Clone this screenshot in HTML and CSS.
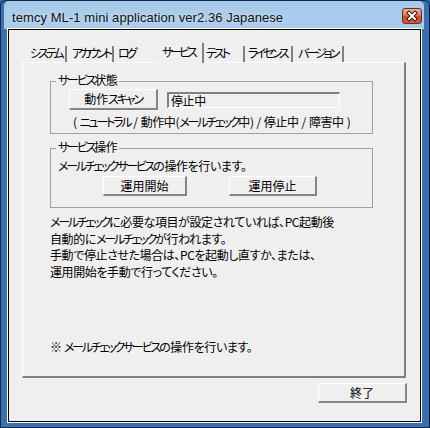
FILE: index.html
```html
<!DOCTYPE html>
<html lang="ja">
<head>
    <meta charset="UTF-8">
    <title>temcy ML-1 mini application</title>
    <link rel="stylesheet" href="styles.css">
</head>
<body>

<div class="window">
    <div class="titlebar">
        <span class="title">temcy ML-1 mini application ver2.36 Japanese</span>
        <button class="close-btn" aria-label="閉じる">
            <svg width="20" height="16" viewBox="0 0 20 16">
                <defs>
                    <linearGradient id="closeGrad" x1="0" y1="0" x2="0" y2="1">
                        <stop offset="0" stop-color="#ecb4a4"/>
                        <stop offset="0.45" stop-color="#dc7a62"/>
                        <stop offset="0.55" stop-color="#c8472a"/>
                        <stop offset="1" stop-color="#d4603c"/>
                    </linearGradient>
                </defs>
                <rect x="0.5" y="0.5" width="19" height="15" rx="2.5" fill="url(#closeGrad)" stroke="#6e2a1c"/>
                <path d="M7 5 L13 11 M13 5 L7 11" stroke="#3a1208" stroke-width="4" stroke-linecap="square"/>
                <path d="M7 5 L13 11 M13 5 L7 11" stroke="#ffffff" stroke-width="2" stroke-linecap="square"/>
            </svg>
        </button>
    </div>

    <div class="client">
        <ul class="tabs">
            <li class="tab">システム</li>
            <li class="tab">アカウント</li>
            <li class="tab">ログ</li>
            <li class="tab active">サービス</li>
            <li class="tab">テスト</li>
            <li class="tab">ライセンス</li>
            <li class="tab">バージョン</li>
        </ul>

        <div class="panel">
            <div class="group group-state">
                <span class="group-title"><span class="kana">サービス</span>状態</span>
                <div class="state-row">
                    <button class="btn btn-scan">動作<span class="kana">スキャン</span></button>
                    <div class="field">停止中</div>
                </div>
                <p class="state-note">( <span class="kana">ニュートラル</span> / 動作中(<span class="kana">メールチェック</span>中) / 停止中 / 障害中 )</p>
            </div>

            <div class="group group-ops">
                <span class="group-title"><span class="kana">サービス</span>操作</span>
                <p class="ops-desc"><span class="kana">メールチェックサービス</span>の操作を行います。</p>
                <div class="ops-row">
                    <button class="btn btn-start">運用開始</button>
                    <button class="btn btn-stop">運用停止</button>
                </div>
            </div>

            <p class="info">
                <span class="kana">メールチェック</span>に必要な項目が設定されていれば、PC起動後<br>
                自動的に<span class="kana">メールチェック</span>が行われます。<br>
                手動で停止させた場合は、PCを起動し直すか、または、<br>
                運用開始を手動で行ってください。
            </p>

            <p class="note">※ <span class="kana">メールチェックサービス</span>の操作を行います。</p>
        </div>

        <div class="footer">
            <button class="btn btn-exit">終了</button>
        </div>
    </div>
</div>

</body>
</html>
```

FILE: styles.css
```css
body {
    margin: 0;
    background: #2f6aa8;
}

.window {
    width: 430px;
    height: 428px;
    box-sizing: border-box;
    border: 1px solid #0f2a4c;
    border-right-color: #0a1f3c;
    border-radius: 6px 6px 0 0;
    background: #3a70ae;
    padding: 0 8px 0 7px;
}

/* title bar */
.titlebar {
    display: flex;
    align-items: flex-start;
    justify-content: space-between;
    height: 28px;
    margin: 0 -3px 0 -4px;
    padding-left: 8px;
    background: #a9cbeb;
    border-radius: 5px 5px 0 0;
}

.title {
    padding-top: 9px;
    font-family: "Liberation Sans", Arial, sans-serif;
    font-size: 13px;
    line-height: 15px;
    letter-spacing: 0.07px;
    color: #111;
    text-shadow: 0 0 5px rgba(255, 255, 255, 0.8);
}

.close-btn {
    margin: 7px 2px 0 0;
    padding: 0;
    border: 0;
    background: none;
    width: 20px;
    height: 16px;
}

.close-btn svg {
    display: block;
}

/* client area */
.client {
    height: 393px;
    box-sizing: border-box;
    border: 1px solid #000;
    box-shadow: 0 0 0 1px #fff;
    background: #efefef;
    font-family: "Noto Sans CJK JP", sans-serif;
    font-size: 12px;
    font-feature-settings: "palt";
    letter-spacing: -0.4px;
    color: #000;
}

/* katakana is set narrow, as in the original UI font */
.kana {
    letter-spacing: -2.2px;
}

.tabs {
    list-style: none;
    display: flex;
    align-items: flex-end;
    height: 19px;
    margin: 13px 0 0 0;
    padding: 0 0 0 17px;
}

.tab {
    box-sizing: border-box;
    height: 16px;
    line-height: 14px;
    letter-spacing: -3px;
    border-right: 2px solid #808080;
    padding-left: 4px;
    white-space: nowrap;
}

.tab:nth-child(1) { width: 41px; }
.tab:nth-child(2) { width: 47px; padding-left: 5px; }
.tab:nth-child(3) { width: 44px; }
.tab:nth-child(5) { width: 41px; padding-left: 2px; }
.tab:nth-child(6) { width: 48px; padding-left: 3px; }
.tab:nth-child(7) { width: 51px; padding-left: 5px; }

.tab.active {
    position: relative;
    width: 48px;
    height: 20px;
    margin: 0 0 -1px -2px;
    padding: 2px 0 0 6px;
    background: #efefef;
}

.panel {
    box-sizing: border-box;
    width: 384px;
    height: 316px;
    margin-left: 13px;
    padding-left: 27px;
    border-top: 1px solid #fff;
    border-left: 1px solid #fff;
    border-right: 2px solid #808080;
    border-bottom: 2px solid #808080;
}

/* group boxes */
.group {
    box-sizing: border-box;
    width: 323px;
    border: 1px solid #a0a0a0;
}

.group-title {
    display: block;
    width: fit-content;
    margin: -9px 0 0 5px;
    padding: 0 2px;
    line-height: 14px;
    background: #efefef;
}

.group-state {
    margin-top: 18px;
    padding-bottom: 4px;
}

.state-row {
    display: flex;
    align-items: center;
    gap: 9px;
    margin-top: 2px;
    padding-left: 18px;
}

.field {
    box-sizing: border-box;
    width: 173px;
    height: 16px;
    padding-left: 2px;
    line-height: 14px;
    border-top: 2px solid #808080;
    border-left: 2px solid #808080;
    border-right: 1px solid #fff;
    border-bottom: 1px solid #fff;
}

.state-note {
    margin: 5px 0 0 0;
    padding-left: 22px;
    line-height: 14px;
    word-spacing: 0.7px;
}

.group-ops {
    margin-top: 14px;
    padding-bottom: 11px;
}

.ops-desc {
    margin: 5px 0 0 0;
    padding-left: 7px;
    line-height: 14px;
}

.ops-row {
    display: flex;
    gap: 42px;
    margin-top: 3px;
    padding-left: 52px;
}

/* buttons */
.btn {
    box-sizing: border-box;
    height: 20px;
    padding: 0;
    font-family: "Noto Sans CJK JP", sans-serif;
    font-size: 12px;
    font-feature-settings: "palt";
    line-height: 16px;
    color: #000;
    background: #efefef;
    border-style: solid;
    border-width: 1px 2px 2px 1px;
    border-color: #fff #858585 #858585 #fff;
}

.btn-scan {
    width: 89px;
    height: 21px;
}

.btn-start {
    width: 84px;
}

.btn-stop {
    width: 88px;
}

.info {
    margin: 6px 0 0 0;
    line-height: 16.5px;
}

.note {
    margin: 59px 0 0 0;
    line-height: 16.5px;
}

.footer {
    display: flex;
    justify-content: flex-end;
    margin-top: 5px;
    padding-right: 13px;
}

.btn-exit {
    width: 89px;
}
```
